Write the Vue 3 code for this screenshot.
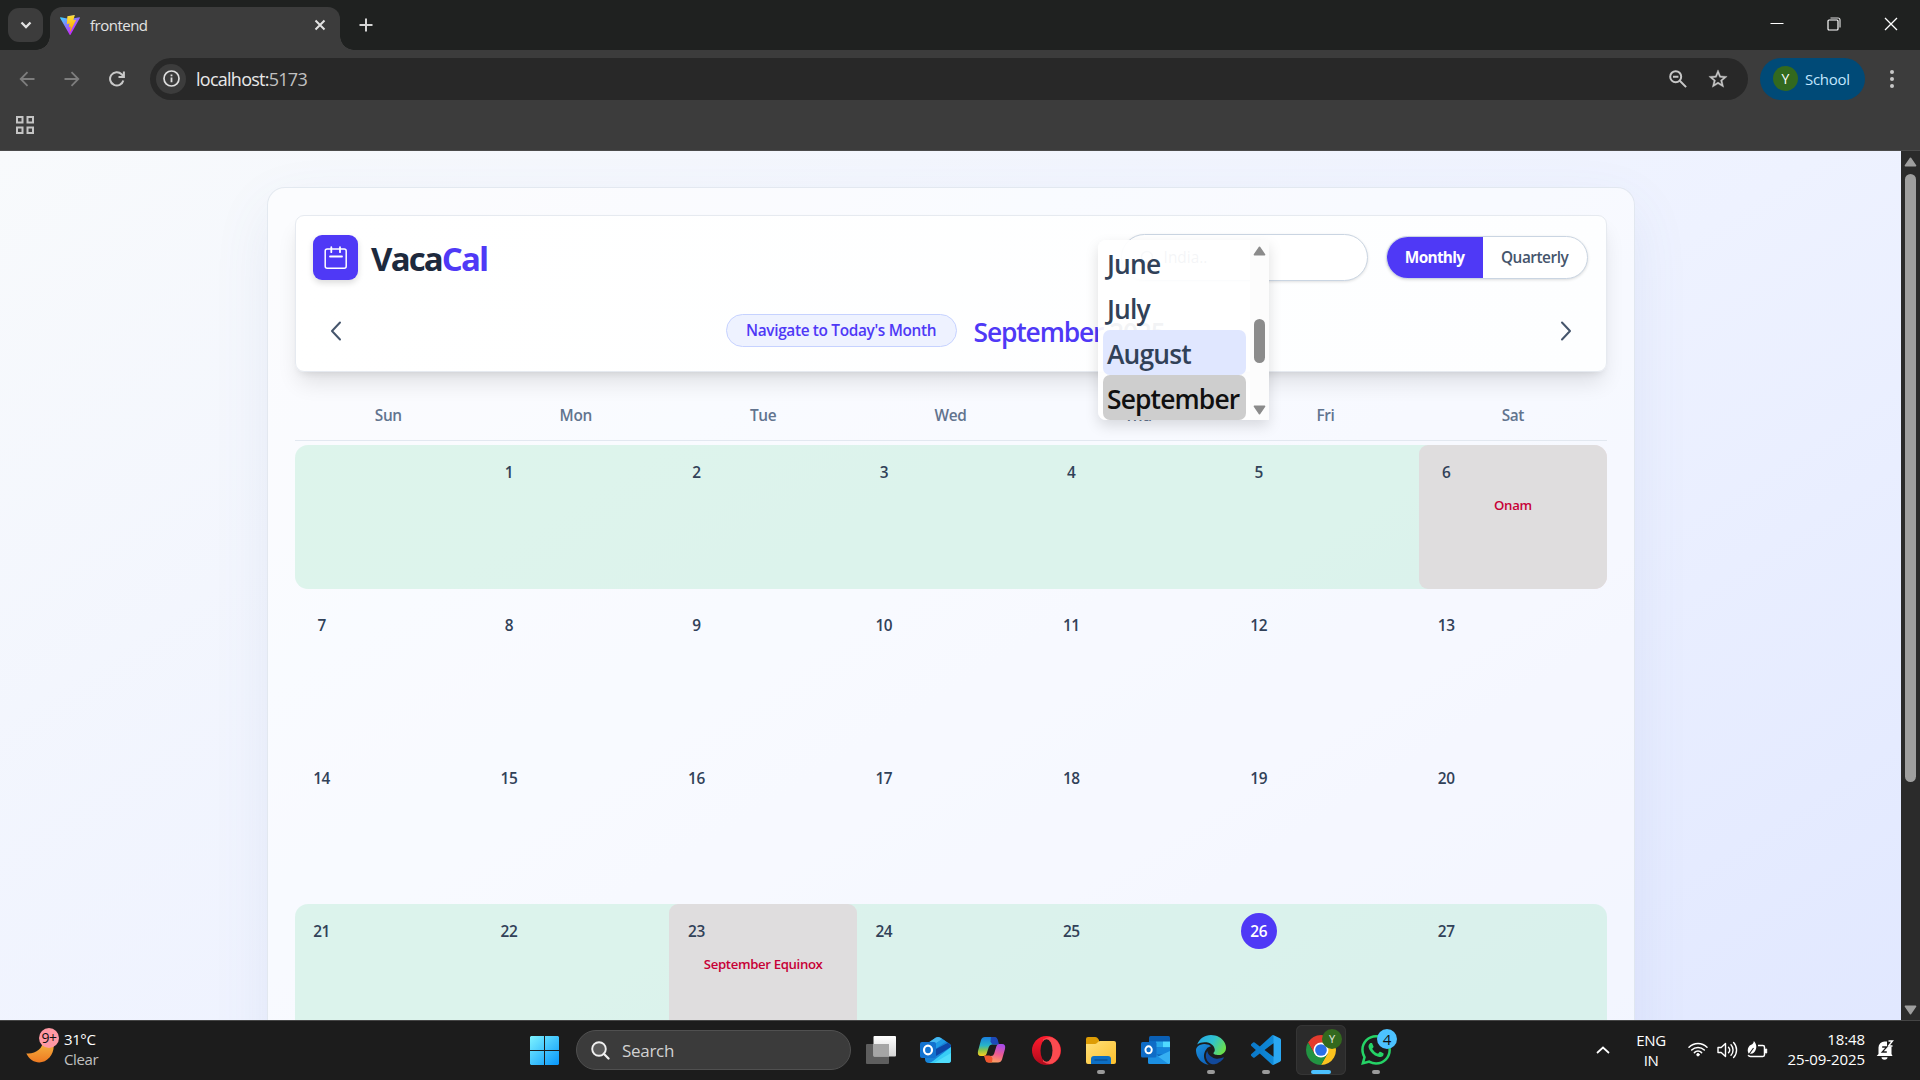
<script setup>
const weekdays = ['Sun', 'Mon', 'Tue', 'Wed', 'Thu', 'Fri', 'Sat']

const holidays = { 6: 'Onam', 23: 'September Equinox' }
const today = 26

const weeks = [
  { long: true, days: [null, 1, 2, 3, 4, 5, 6] },
  { long: false, days: [7, 8, 9, 10, 11, 12, 13] },
  { long: false, days: [14, 15, 16, 17, 18, 19, 20] },
  { long: true, days: [21, 22, 23, 24, 25, 26, 27] },
]

const months = [
  { name: 'June' },
  { name: 'July' },
  { name: 'August', state: 'hovered' },
  { name: 'September', state: 'selected' },
]
</script>

<template>
  <div class="screen">
    <!-- Tab strip -->
    <div class="tabstrip">
      <div class="tab-search">
        <svg width="12" height="8" viewBox="0 0 12 8"><path d="M1.5 1.5 6 6l4.500-4.500" fill="none" stroke="#e3e3e3" stroke-width="2.300" /></svg>
      </div>
      <div class="tab">
        <svg class="vite" width="20" height="20" viewBox="0 0 256 257">
          <defs>
            <linearGradient id="va" x1="-.8%" x2="57.600%" y1="7.700%" y2="78.400%"><stop offset="0%" stop-color="#41D1FF" /><stop offset="100%" stop-color="#BD34FE" /></linearGradient>
            <linearGradient id="vb" x1="43.400%" x2="50.300%" y1="2.200%" y2="89%"><stop offset="0%" stop-color="#FFEA83" /><stop offset="8%" stop-color="#FFDD35" /><stop offset="100%" stop-color="#FFA800" /></linearGradient>
          </defs>
          <path fill="url(#va)" d="M255.153 37.938L134.897 252.976c-2.483 4.440-8.862 4.466-11.382.048L.875 37.958c-2.746-4.814 1.371-10.646 6.827-9.670l120.385 21.517a6.537 6.537 0 0 0 2.322-.004l117.867-21.483c5.438-.991 9.574 4.796 6.877 9.620Z" />
          <path fill="url(#vb)" d="M185.432.063L96.440 17.501a3.268 3.268 0 0 0-2.634 3.014l-5.474 92.456a3.268 3.268 0 0 0 3.997 3.378l24.777-5.718c2.318-.535 4.413 1.507 3.936 3.838l-7.361 36.047c-.495 2.426 1.782 4.500 4.151 3.780l15.304-4.649c2.372-.720 4.652 1.360 4.150 3.788l-11.698 56.621c-.732 3.542 3.979 5.473 5.943 2.437l1.313-2.028l72.516-144.720c1.215-2.423-.880-5.186-3.540-4.672l-25.505 4.922c-2.396.462-4.435-1.770-3.759-4.114l16.646-57.705c.677-2.350-1.370-4.583-3.769-4.113Z" />
        </svg>
        <span class="tab-title">frontend</span>
        <svg width="12" height="12" viewBox="0 0 12 12"><path d="M1.500 1.500l9 9M10.500 1.500l-9 9" stroke="#e3e3e3" stroke-width="2" /></svg>
      </div>
      <div class="new-tab">
        <svg width="14" height="14" viewBox="0 0 14 14"><path d="M7 .5v13M.5 7h13" stroke="#d5d5d5" stroke-width="2" /></svg>
      </div>
      <div class="window-controls">
        <svg width="14" height="14" viewBox="0 0 14 14"><path d="M.5 6.500h13" stroke="#fff" stroke-width="1" /></svg>
        <svg width="14" height="14" viewBox="0 0 14 14"><path d="M3.500 1h7.500a2 2 0 0 1 2 2v7.500" fill="none" stroke="#ddd" stroke-width="1.200" /><rect x="1" y="3" width="10" height="10" rx="1" fill="none" stroke="#fff" stroke-width="1.200" /></svg>
        <svg width="14" height="14" viewBox="0 0 14 14"><path d="M1 1l12 12M13 1L1 13" stroke="#fff" stroke-width="1.300" /></svg>
      </div>
    </div>

    <!-- Toolbar -->
    <div class="toolbar">
      <svg class="nav-btn" width="16" height="16" viewBox="0 0 16 16"><path d="M15.500 8H2M8.500 1.200L1.700 8l6.800 6.800" fill="none" stroke="#7d7d7d" stroke-width="1.800" /></svg>
      <svg class="nav-btn" width="16" height="16" viewBox="0 0 16 16"><path d="M.5 8H14M7.500 1.200L14.300 8l-6.800 6.800" fill="none" stroke="#7d7d7d" stroke-width="1.800" /></svg>
      <svg class="nav-btn" width="16" height="16" viewBox="0 0 16 16"><path d="M14.300 9.500A6.700 6.700 0 1 1 12.600 3.200L14.600 5.300M9.500 6h5.400V.5" fill="none" stroke="#c9c9c9" stroke-width="2" /></svg>
      <div class="omnibox">
        <div class="site-info">
          <svg width="17" height="17" viewBox="0 0 17 17"><circle cx="8.500" cy="8.500" r="7.500" fill="none" stroke="#dedede" stroke-width="1.700" /><path d="M8.500 7.600v4.700M8.500 4.500v1.700" stroke="#dedede" stroke-width="1.800" /></svg>
        </div>
        <span class="url">localhost:<span>5173</span></span>
        <svg class="zoom-icon" width="18" height="18" viewBox="0 0 18 18"><circle cx="6.700" cy="6.700" r="5.500" fill="none" stroke="#c7c7c7" stroke-width="2" /><path d="M4 6.700h5.400M10.800 10.800l6.300 6.300" stroke="#c7c7c7" stroke-width="2" /></svg>
        <svg width="22" height="22" viewBox="0 0 24 24"><path fill="#c7c7c7" d="M22 9.240l-7.190-.62L12 2 9.190 8.630 2 9.240l5.460 4.730L5.820 21 12 17.270 18.180 21l-1.630-7.030L22 9.240zM12 15.400l-3.760 2.270 1-4.280-3.320-2.880 4.380-.38L12 6.100l1.710 4.040 4.380.38-3.320 2.880 1 4.280L12 15.400z" stroke="#c7c7c7" stroke-width=".4" /></svg>
      </div>
      <div class="profile">
        <span class="avatar">Y</span>
        <span class="profile-name">School</span>
      </div>
      <svg class="kebab" width="6" height="20" viewBox="0 0 6 20"><g fill="#c7c7c7"><circle cx="3" cy="3" r="2" /><circle cx="3" cy="10" r="2" /><circle cx="3" cy="17" r="2" /></g></svg>
    </div>
    <div class="bookmarks">
      <svg width="18" height="18" viewBox="0 0 18 18"><g fill="none" stroke="#c4c4c4" stroke-width="2"><rect x="1" y="1" width="5.500" height="5.500" /><rect x="11.500" y="1" width="5.500" height="5.500" /><rect x="1" y="11.500" width="5.500" height="5.500" /><rect x="11.500" y="11.500" width="5.500" height="5.500" /></g></svg>
    </div>

    <!-- Page -->
    <div class="viewport">
      <main class="page">
        <div class="card">
          <header class="header">
            <div class="row">
              <div class="brand">
                <div class="logo">
                  <svg width="25" height="25" viewBox="0 0 25 25" fill="none" stroke="#fff" stroke-linecap="round"><rect x="2.200" y="4" width="21" height="19.300" rx="2" stroke-width="1.500" /><path d="M8.300 2.200v5M17 2.200v5" stroke-width="1.800" /><path d="M7 11.500h12" stroke-width="1.800" /></svg>
                </div>
                <h1>Vaca<span>Cal</span></h1>
              </div>
              <div class="controls">
                <div class="country">
                  <svg width="16" height="16" viewBox="0 0 16 16"><circle cx="7" cy="7" r="5.500" fill="none" stroke="#94a3b8" stroke-width="1.500" /></svg>
                  <span>India..</span>
                </div>
                <div class="toggle">
                  <span class="toggle-item active"><span>Monthly</span></span>
                  <span class="toggle-item quarterly"><span>Quarterly</span></span>
                </div>
              </div>
            </div>
            <div class="row nav-row">
              <div class="arrow"><svg width="12" height="20" viewBox="0 0 12 20"><path d="M10 1.500L2 10l8 8.500" /></svg></div>
              <div class="month-nav">
                <div class="today-btn"><span>Navigate to Today's Month</span></div>
                <h2>September <span>2025</span></h2>
              </div>
              <div class="arrow"><svg width="12" height="20" viewBox="0 0 12 20"><path d="M2 1.500L10 10l-8 8.500" /></svg></div>
            </div>
          </header>

          <div class="weekdays">
            <span v-for="d in weekdays" :key="d">{{ d }}</span>
          </div>

          <div class="weeks">
            <div v-for="(w, i) in weeks" :key="i" class="week" :class="{ long: w.long }">
              <div v-for="(d, j) in w.days" :key="j" class="day" :class="{ holiday: holidays[d], last: j === 6 }">
                <div class="day-inner">
                  <span class="num" :class="{ today: d === today }">{{ d }}</span>
                  <span v-if="holidays[d]" class="event">{{ holidays[d] }}</span>
                </div>
              </div>
            </div>
          </div>
        </div>

        <div class="month-menu">
          <div class="month-list">
            <div v-for="m in months" :key="m.name" class="month" :class="m.state">{{ m.name }}</div>
          </div>
          <div class="menu-scroll">
            <svg width="13" height="10" viewBox="0 0 13 10"><path d="M6.500 1.300L11.600 8.700H1.400z" fill="#8b8b8b" stroke="#8b8b8b" stroke-width="1.500" stroke-linejoin="round" /></svg>
            <div class="menu-thumb"></div>
            <svg width="13" height="10" viewBox="0 0 13 10"><path d="M6.500 8.700L11.600 1.300H1.400z" fill="#8b8b8b" stroke="#8b8b8b" stroke-width="1.500" stroke-linejoin="round" /></svg>
          </div>
        </div>
      </main>
      <div class="scrollbar">
        <svg width="13" height="10" viewBox="0 0 13 10"><path d="M6.500 1.300L11.600 8.700H1.400z" fill="#9f9f9f" stroke="#9f9f9f" stroke-width="1.500" stroke-linejoin="round" /></svg>
        <div class="thumb"></div>
        <svg class="down" width="13" height="10" viewBox="0 0 13 10"><path d="M6.500 8.700L11.600 1.300H1.400z" fill="#9f9f9f" stroke="#9f9f9f" stroke-width="1.500" stroke-linejoin="round" /></svg>
      </div>
    </div>

    <!-- Taskbar -->
    <div class="taskbar">
      <div class="weather">
        <div class="moon">
          <svg width="30" height="30" viewBox="0 0 30 30"><defs><linearGradient id="mo" x1="0" y1="0" x2="0" y2="1"><stop offset="0" stop-color="#f7c64a" /><stop offset="1" stop-color="#ee7a22" /></linearGradient></defs><path d="M25 2c5.500 7 4.500 15.500-.5 21.500C18 31 6.500 30 1.300 19.500 12 20.500 20 13 17.500 3z" fill="url(#mo)" /></svg>
          <span class="count">9+</span>
        </div>
        <div class="weather-text"><span>31°C</span><span class="dim">Clear</span></div>
      </div>

      <div class="apps">
        <div class="slot">
          <svg width="29" height="29" viewBox="0 0 29 29"><defs><linearGradient id="wi" gradientUnits="userSpaceOnUse" x1="0" y1="0" x2="29" y2="29"><stop offset="0" stop-color="#7df3ff" /><stop offset="1" stop-color="#0796fb" /></linearGradient></defs><path fill="url(#wi)" d="M1 0h13v14H0V1zM15 0h13l1 1v13H15zM0 15h14v14H1l-1-1zM15 15h14v13l-1 1H15z" /></svg>
        </div>
        <div class="search">
          <svg width="19" height="19" viewBox="0 0 19 19"><circle cx="8" cy="8" r="6.800" fill="#5a5a5a" stroke="#f0f0f0" stroke-width="1.900" /><path d="M12.800 12.800l4.700 4.700" stroke="#f0f0f0" stroke-width="2.300" stroke-linecap="round" /></svg>
          <span>Search</span>
        </div>
        <div class="slot">
          <svg width="30" height="28" viewBox="0 0 30 28"><defs><linearGradient id="tv" x1="0" y1="0" x2="0" y2="1"><stop offset="0" stop-color="#fff" /><stop offset="1" stop-color="#d4d4d4" /></linearGradient></defs><rect x="0" y="8" width="23" height="20" rx="1" fill="#5e5e5e" /><rect x="7.500" y="0" width="22.500" height="20.500" rx="1" fill="url(#tv)" /><rect x="7.500" y="8" width="15.500" height="12.500" fill="#a5a5a5" /></svg>
        </div>
        <div class="slot">
          <svg width="32" height="28" viewBox="0 0 32 28"><path d="M5 9L16 1.500q2-1.200 4 0L30 8q1 .8 1 2v14q0 3-3 3H9q-4 0-4-4z" fill="#1784d8" /><path d="M5 9L16 1.500q2-1.200 4 0l2.500 1.600L9 12H5z" fill="#45b8f0" /><path d="M9 12L22.500 3.100 26 5.400 14 14z" fill="#1f9be6" /><path d="M14 14L28 6.700 30.500 9q.5 1 .5 2L16 20z" fill="#0d47a8" /><path d="M31 11v13q0 3-3 3H9q2-.5 4-2z" fill="#38cdf6" /><path d="M31 17v7q0 3-3 3H14z" fill="#5be4fd" opacity=".7" /><rect x="0" y="6" width="16" height="16" rx="2" fill="#1272cf" /><ellipse cx="8" cy="14" rx="4" ry="4.400" fill="none" stroke="#fff" stroke-width="2.200" /></svg>
        </div>
        <div class="slot">
          <svg width="29" height="28" viewBox="0 0 29 28"><defs><linearGradient id="c1" x1="0" y1="0" x2="0" y2="1"><stop offset="0" stop-color="#1a7fe0" /><stop offset=".45" stop-color="#28b4c8" /><stop offset=".7" stop-color="#8bc34a" /><stop offset="1" stop-color="#ffcf1f" /></linearGradient><linearGradient id="c2" x1=".6" y1="0" x2=".3" y2="1"><stop offset="0" stop-color="#a94be8" /><stop offset=".5" stop-color="#ee5c8f" /><stop offset="1" stop-color="#ffa95c" /></linearGradient></defs><path d="M8 1h9q2 0 3 3l1.500 4.500H15q-2.500 0-3.200 2.500L9.500 18q-.8 2-2.500 2H4Q0 20 1 15L4 4q1-3 4-3z" fill="url(#c1)" /><path d="M14 1h4q2 0 2.700 2.500L22 8.500h-5q-2.500 0-3.500-3z" fill="#1d49b8" /><path d="M21 26.500h-9q-2 0-3-2.500L7.500 20H14q2.500 0 3.200-2.500L19.500 10q.8-2 2.500-2h3q4 0 3 5l-3 10.500q-1 3-4 3z" fill="url(#c2)" /><path d="M15 26.500h-4q-2 0-2.700-2.500L7 19.500h5q2.500 0 3.500 3z" fill="#f0562f" /></svg>
        </div>
        <div class="slot">
          <svg width="29" height="29" viewBox="0 0 29 29"><defs><linearGradient id="op" x1="0" y1="0" x2="0" y2="1"><stop offset="0" stop-color="#ff1b2d" /><stop offset="1" stop-color="#b00a1c" /></linearGradient></defs><circle cx="14.500" cy="14.500" r="14.500" fill="url(#op)" /><path d="M11 3.500q7-5 12.500 0a14.500 14.500 0 0 1 0 22q-5.500 5-12.500 0z" fill="#fb4b50" /><ellipse cx="14.500" cy="14.500" rx="6" ry="11.300" fill="#1c1c1c" /></svg>
        </div>
        <div class="slot running">
          <svg width="30" height="27" viewBox="0 0 30 27"><defs><linearGradient id="fo" x1="0" y1="0" x2="1" y2="1"><stop offset="0" stop-color="#ffe07a" /><stop offset="1" stop-color="#fdc02c" /></linearGradient></defs><path d="M0 2q0-2 2-2h7q1.500 0 2.500 1L13 3v7H0z" fill="#dd9c05" /><path d="M0 7h9q1 0 2-1l1.500-1.500q.6-.5 1.500-.5h14q2 0 2 2v19q0 2-2 2H2q-2 0-2-2z" fill="url(#fo)" /><path d="M5 27v-5q0-3 3-3h14q3 0 3 3v5z" fill="#0d6fc4" /><path d="M8.500 23h13" stroke="#0b4a8c" stroke-width="1.200" /></svg>
        </div>
        <div class="slot">
          <svg width="30" height="28" viewBox="0 0 30 28"><rect x="8" y="0" width="21" height="20" rx="1.500" fill="#0a5fb4" /><path d="M8 5.500h7v6H8z" fill="#0d7ad4" /><path d="M15 5.500h7v6h-7z" fill="#28a8ea" /><path d="M22 5.500h7v6h-7z" fill="#50d9ff" /><path d="M15 11.500h14v7H15z" fill="#1585dc" /><path d="M7 12l12 9 10-6v11.500q0 1.500-1.500 1.500h-19Q7 28 7 26.500z" fill="#1b8fe2" /><path d="M29 15v11.500q0 1.500-1.500 1.500L17 20.500z" fill="#36b0f2" /><rect x="0" y="6" width="15.500" height="15.500" rx="1.500" fill="#0f6cc6" /><ellipse cx="7.600" cy="13.800" rx="3.200" ry="3.500" fill="none" stroke="#fff" stroke-width="1.900" /></svg>
        </div>
        <div class="slot running">
          <svg width="30" height="30" viewBox="0 0 24 24"><defs><linearGradient id="e1" x1="0" y1=".2" x2="1" y2=".6"><stop offset="0" stop-color="#27a9e6" /><stop offset=".5" stop-color="#2fc2cf" /><stop offset="1" stop-color="#6be04a" /></linearGradient><linearGradient id="e2" x1="0" y1="0" x2=".6" y2="1"><stop offset="0" stop-color="#1b93de" /><stop offset="1" stop-color="#0f63bd" /></linearGradient></defs>
            <path fill="#12499b" d="M21.860 17.860q.14 0 .25.12.1.13.1.25t-.11.33l-.32.46-.43.53-.44.5q-.26.25-.38.37l-.22.23q-.58.53-1.340 1.040-.76.51-1.600.91-.86.4-1.740.64t-1.670.24q-.9 0-1.690-.28-.8-.28-1.480-.78-.68-.5-1.220-1.170-.53-.66-.92-1.440-.38-.77-.58-1.600-.2-.83-.2-1.670 0-1 .32-1.960.33-.97.87-1.800.14.95.55 1.770.41.82 1.020 1.500.6.68 1.380 1.210.78.54 1.640.9.86.36 1.770.56.92.2 1.800.2 1.120 0 2.180-.24 1.060-.23 2.060-.72l.2-.1.2-.05z" />
            <path fill="url(#e2)" d="M6.360 16.590q0 1.100.27 2.150.27 1.060.78 2.030.51.96 1.240 1.770.74.82 1.660 1.400-1.470-.2-2.800-.74-1.330-.55-2.480-1.370-1.150-.83-2.080-1.900-.92-1.070-1.580-2.330T.36 14.940Q0 13.540 0 12.060q0-.81.32-1.490.31-.68.83-1.230.53-.55 1.200-.96.66-.4 1.350-.66.74-.27 1.500-.39.78-.12 1.550-.12.7 0 1.420.1.72.12 1.400.35.68.23 1.320.57.63.35 1.160.83-.35 0-.7.07-.33.07-.65.23v-.02q-.63.28-1.200.74-.57.46-1.050 1.040-.48.58-.87 1.260-.38.67-.65 1.390-.27.71-.42 1.440-.15.72-.15 1.380z" />
            <path fill="url(#e1)" d="M11.960.06q1.700 0 3.330.39 1.630.38 3.070 1.150 1.430.77 2.620 1.930 1.180 1.160 1.980 2.700.49.94.76 1.960.28 1 .28 2.080 0 .89-.23 1.700-.24.8-.69 1.480-.45.68-1.100 1.220-.64.53-1.450.88-.54.24-1.110.36-.58.13-1.160.13-.42 0-.97-.03-.54-.03-1.100-.12-.55-.1-1.050-.28-.5-.19-.84-.5-.12-.09-.23-.24-.1-.16-.1-.33 0-.15.16-.35.16-.2.35-.5.2-.28.36-.68.16-.4.16-.95 0-1.060-.4-1.960-.4-.91-1.060-1.640-.66-.74-1.520-1.280-.86-.55-1.790-.89-.84-.3-1.720-.44-.87-.14-1.760-.14-1.550 0-3.060.45T.94 7.550q.71-1.740 1.810-3.130 1.100-1.380 2.520-2.350Q6.680 1.100 8.370.58q1.700-.52 3.580-.52Z" />
          </svg>
        </div>
        <div class="slot running">
          <svg width="30" height="30" viewBox="0 0 24 24"><defs><linearGradient id="vs" x1="0" y1="0" x2="1" y2="0"><stop offset="0" stop-color="#0b78c8" /><stop offset=".74" stop-color="#0f8ad8" /><stop offset=".76" stop-color="#2aa7f2" /><stop offset="1" stop-color="#2aa7f2" /></linearGradient></defs><path fill="url(#vs)" d="M23.150 2.587L18.210.210a1.494 1.494 0 0 0-1.705.290l-9.460 8.630-4.120-3.128a.999.999 0 0 0-1.276.057L.327 7.261A1 1 0 0 0 .326 8.740L3.899 12 .326 15.260a1 1 0 0 0 .001 1.479L1.650 17.940a.999.999 0 0 0 1.276.057l4.120-3.128 9.460 8.630a1.492 1.492 0 0 0 1.704.290l4.942-2.377A1.500 1.500 0 0 0 24 20.060V3.939a1.500 1.500 0 0 0-.850-1.352zm-5.146 14.861L10.826 12l7.178-5.448v10.896z" /></svg>
        </div>
        <div class="slot current">
          <svg width="30" height="30" viewBox="-20 -20 40 40"><path d="M-17.320-10A20 20 0 0 1 17.320-10L0-10-8.660 5z" fill="#e33b2e" /><path d="M17.320-10A20 20 0 0 1 0 20L8.660 5 0-10z" fill="#fcc31e" /><path d="M0 20A20 20 0 0 1-17.320-10L-8.660 5 8.660 5z" fill="#229342" /><circle r="10" fill="#fff" /><circle r="7.800" fill="#2a6fe8" /></svg>
          <span class="badge user">Y</span>
        </div>
        <div class="slot running">
          <svg width="30" height="30" viewBox="0 0 24 24"><path fill="#25d366" d="M17.472 14.382c-.297-.149-1.758-.867-2.030-.967-.273-.099-.471-.148-.670.150-.197.297-.767.966-.940 1.164-.173.199-.347.223-.644.075-.297-.150-1.255-.463-2.390-1.475-.883-.788-1.480-1.761-1.653-2.059-.173-.297-.018-.458.130-.606.134-.133.298-.347.446-.520.149-.174.198-.298.298-.497.099-.198.050-.371-.025-.520-.075-.149-.669-1.612-.916-2.207-.242-.579-.487-.500-.669-.510-.173-.008-.371-.010-.570-.010-.198 0-.520.074-.792.372-.272.297-1.040 1.016-1.040 2.479 0 1.462 1.065 2.875 1.213 3.074.149.198 2.096 3.200 5.077 4.487.709.306 1.262.489 1.694.625.712.227 1.360.195 1.871.118.571-.085 1.758-.719 2.006-1.413.248-.694.248-1.289.173-1.413-.074-.124-.272-.198-.570-.347m-5.421 7.403h-.004a9.870 9.870 0 0 1-5.031-1.378l-.361-.214-3.741.982.998-3.648-.235-.374a9.860 9.860 0 0 1-1.510-5.260c.001-5.450 4.436-9.884 9.888-9.884 2.640 0 5.122 1.030 6.988 2.898a9.825 9.825 0 0 1 2.893 6.994c-.003 5.450-4.437 9.884-9.885 9.884m8.413-18.297A11.815 11.815 0 0 0 12.050 0C5.495 0 .160 5.335.157 11.892c0 2.096.547 4.142 1.588 5.945L.057 24l6.305-1.654a11.882 11.882 0 0 0 5.683 1.448h.005c6.554 0 11.890-5.335 11.893-11.893a11.821 11.821 0 0 0-3.480-8.413Z" /></svg>
          <span class="badge">4</span>
        </div>
      </div>

      <div class="tray">
        <svg class="caret" width="14" height="8" viewBox="0 0 14 8"><path d="M1 7l6-5.500L13 7" fill="none" stroke="#fff" stroke-width="1.700" /></svg>
        <div class="lang"><span>ENG</span><span>IN</span></div>
        <div class="status">
          <svg width="20" height="16" viewBox="0 0 20 16" fill="none" stroke="#fff" stroke-width="1.500" stroke-linecap="round"><path d="M1 6.200a12.700 12.700 0 0 1 18 0M3.700 9a8.900 8.900 0 0 1 12.600 0M6.400 11.600a5.100 5.100 0 0 1 7.200 0" /><circle cx="10" cy="13.700" r="1.300" fill="#fff" stroke-width=".8" /></svg>
          <svg width="21" height="18" viewBox="0 0 21 18" fill="none" stroke="#fff" stroke-width="1.400" stroke-linecap="round" stroke-linejoin="round"><path d="M1 6.500h3.200L8.500 2.500v13L4.200 11.500H1zM11.500 6.200a4.200 4.200 0 0 1 0 5.600M14 3.800a7.600 7.600 0 0 1 0 10.400M16.600 1.500a11 11 0 0 1 0 15" /></svg>
          <svg width="21" height="18" viewBox="0 0 21 18"><path d="M11 4.500h4.800q1.700 0 1.700 1.700v7.600q0 1.700-1.700 1.700H3.500q-1.700 0-2.300-1.700" fill="none" stroke="#fff" stroke-width="1.500" /><path d="M18.500 8h1.200v4h-1.200z" fill="#fff" stroke="#fff" /><path d="M6.800 0c3.200 3 3.400 8.200.2 11.500q-2 2-5.500 1C-.3 9 1.200 5 4.200 3.800 5.800 3 6.800 2 6.800 0z" fill="#fff" /><path d="M1.500 14L6.500 7" stroke="#1c1c1c" stroke-width="1.100" /></svg>
        </div>
        <div class="clock"><span>18:48</span><span>25-09-2025</span></div>
        <svg class="bell" width="18" height="20" viewBox="0 0 18 20"><path d="M2.500 14V7.500A6 6 0 0 1 8.500 1.500h2.500v5h4.500V14l1 2H.7z" fill="#fff" /><path d="M5.500 17.300h6a3 2.400 0 0 1-6 0z" fill="#fff" /><path d="M12.500 1h4l-4 5h4" fill="none" stroke="#fff" stroke-width="1.400" /><path d="M6.200 7h4.600l-4.600 5h4.600" fill="none" stroke="#1c1c1c" stroke-width="1.300" /></svg>
      </div>
    </div>
  </div>
</template>

<style>
body {
  margin: 0;
  background: #1c1c1c;
}
</style>

<style scoped>
.screen {
  width: 1920px;
  height: 1080px;
  display: flex;
  flex-direction: column;
  overflow: hidden;
  font-family: 'Open Sans', 'Noto Sans', sans-serif;
  background: #3c3c3c;
}
.screen *,
.screen {
  box-sizing: border-box;
}
svg {
  display: block;
  flex: none;
}
h1,
h2 {
  margin: 0;
}

/* tab strip */
.tabstrip {
  flex: none;
  height: 50px;
  display: flex;
  background: #1f2120;
  padding-left: 8px;
}
.tab-search {
  width: 35px;
  height: 34px;
  margin-top: 8px;
  border-radius: 11px;
  background: #3c3c3c;
  display: flex;
  align-items: center;
  justify-content: center;
}
.tab {
  position: relative;
  width: 290px;
  height: 43px;
  margin: 7px 0 0 7px;
  padding: 0 14px 7px 10px;
  border-radius: 12px 12px 0 0;
  background: #3c3c3c;
  display: flex;
  align-items: center;
}
.tab::before,
.tab::after {
  content: '';
  position: absolute;
  bottom: 0;
  width: 14px;
  height: 14px;
}
.tab::before {
  left: -14px;
  background: radial-gradient(circle at 0 0, transparent 13.500px, #3c3c3c 14px);
}
.tab::after {
  right: -14px;
  background: radial-gradient(circle at 100% 0, transparent 13.500px, #3c3c3c 14px);
}
.tab-title {
  flex: 1;
  margin-left: 10px;
  font-size: 15px;
  letter-spacing: -0.500px;
  color: #e3e3e3;
}
.new-tab {
  margin: 18px 0 0 19px;
}
.window-controls {
  margin: 17px 22px 0 auto;
  display: flex;
  gap: 43px;
}

/* toolbar */
.toolbar {
  flex: none;
  height: 57px;
  display: flex;
  align-items: center;
  padding: 0 25px 0 19px;
}
.nav-btn {
  margin-right: 29px;
}
.omnibox {
  width: 1598px;
  height: 42px;
  margin-left: -4px;
  border-radius: 21px;
  background: #282828;
  display: flex;
  align-items: center;
  padding: 0 19px 0 6px;
}
.site-info {
  width: 30px;
  height: 30px;
  border-radius: 50%;
  background: #3c3c3c;
  display: flex;
  align-items: center;
  justify-content: center;
}
.url {
  flex: 1;
  margin-left: 10px;
  font-size: 18px;
  letter-spacing: -0.740px;
  color: #e8e8e8;
}
.url span {
  color: #c0c0c0;
}
.zoom-icon {
  margin-right: 20px;
}
.profile {
  width: 105px;
  height: 42px;
  margin-left: 12px;
  border-radius: 21px;
  background: #004a77;
  display: flex;
  align-items: center;
  padding-left: 13px;
}
.avatar {
  width: 25px;
  height: 25px;
  border-radius: 50%;
  background: #33691e;
  color: #fff;
  font-size: 14px;
  line-height: 25px;
  text-align: center;
}
.profile-name {
  margin-left: 7px;
  font-size: 15px;
  letter-spacing: -0.300px;
  color: #c2e7ff;
}
.kebab {
  margin-left: auto;
}
.bookmarks {
  flex: none;
  height: 44px;
  padding: 9px 0 0 16px;
  border-bottom: 1px solid #4b4b4b;
}

/* page */
.viewport {
  flex: none;
  height: 869px;
  display: flex;
}
.page {
  position: relative;
  width: 1901px;
  height: 869px;
  overflow: hidden;
  padding: 36px 0 0 266.600px;
  background: linear-gradient(to bottom right, #f8fafc, #eef2ff 48%, #e0e7ff 90%) 0 0 / 1901px 1180px;
}
.card {
  width: 1368px;
  height: 1100px;
  padding: 27px;
  border: 1px solid rgba(203, 213, 225, 0.5);
  border-radius: 18px;
  background: rgba(255, 255, 255, 0.55);
  box-shadow: 0 20px 60px -4px rgba(80, 110, 170, 0.1);
}
.header {
  height: 157px;
  padding: 18px 17.500px;
  border: 1px solid #e6eaf0;
  border-radius: 9px;
  background: linear-gradient(100deg, #ffffff, #fdfeff);
  box-shadow: 0 14px 22px -4px rgba(0, 0, 0, 0.11), 0 5px 9px -5px rgba(0, 0, 0, 0.12);
}
.row {
  display: flex;
  align-items: center;
  justify-content: space-between;
  height: 47px;
}
.brand {
  display: flex;
  align-items: center;
}
.logo {
  width: 45px;
  height: 45px;
  border-radius: 9px;
  background: #4f39f6;
  box-shadow: 0 3px 6px rgba(0, 0, 0, 0.14);
  display: flex;
  align-items: center;
  justify-content: center;
}
h1 {
  margin: 2px 0 0 13px;
  font-size: 33px;
  font-weight: 700;
  line-height: 45px;
  letter-spacing: -1.900px;
  color: #1d293d;
}
h1 span {
  color: #4f39f6;
}
.controls {
  display: flex;
  align-items: center;
  gap: 18px;
  margin-right: 0.500px;
}
.country {
  width: 247px;
  height: 47px;
  padding-left: 18px;
  border: 1px solid #cad5e2;
  border-radius: 24px;
  background: #fff;
  box-shadow: 0 1px 3px rgba(0, 0, 0, 0.12);
  display: flex;
  align-items: center;
  gap: 8px;
  font-size: 15.400px;
  color: #64748b;
}
.toggle {
  width: 202px;
  height: 43px;
  border: 1px solid #cad5e2;
  border-radius: 22px;
  background: #fff;
  overflow: hidden;
  box-shadow: 0 1px 3px rgba(0, 0, 0, 0.14);
  display: flex;
}
.toggle-item {
  width: 104px;
  display: flex;
  align-items: center;
  justify-content: center;
  font-size: 15.400px;
  font-weight: 600;
  letter-spacing: -0.480px;
  color: #45556c;
}
.toggle-item.active {
  width: 96px;
  background: #4f39f6;
  color: #fff;
  font-weight: 700;
  letter-spacing: -0.700px;
}
.nav-row {
  margin-top: 26px;
}
.arrow {
  width: 45px;
  height: 45px;
  display: flex;
  align-items: center;
  justify-content: center;
}
.arrow path {
  fill: none;
  stroke: #45556c;
  stroke-width: 2;
  stroke-linecap: round;
  stroke-linejoin: round;
}
.month-nav {
  display: flex;
  align-items: center;
}
.today-btn {
  width: 231px;
  height: 33px;
  border: 1px solid #c6d2ff;
  border-radius: 17px;
  background: #eef2ff;
  display: flex;
  align-items: center;
  justify-content: center;
  font-size: 15.400px;
  font-weight: 600;
  letter-spacing: -0.340px;
  color: #4f39f6;
  white-space: nowrap;
}
h2 {
  width: 202px;
  margin: 4px 0 0 17px;
  font-size: 26.400px;
  font-weight: 600;
  line-height: 35px;
  letter-spacing: -1.150px;
  white-space: nowrap;
  color: #4f39f6;
}
h2 span {
  color: #45556c;
}
.weekdays {
  height: 44px;
  margin-top: 25px;
  padding-top: 8px;
  border-bottom: 1px solid #e2e8f0;
  display: grid;
  grid-template-columns: repeat(7, 1fr);
  text-align: center;
  font-size: 15.400px;
  font-weight: 600;
  line-height: 22px;
  letter-spacing: -0.350px;
  color: #62748e;
}
.weeks {
  margin-top: 4px;
  display: flex;
  flex-direction: column;
  gap: 9px;
}
.week {
  height: 144px;
  display: grid;
  grid-template-columns: repeat(7, 1fr);
  border-radius: 13px;
  overflow: hidden;
}
.week.long {
  background: rgba(186, 236, 212, 0.45);
}
.day.holiday.last {
  background: linear-gradient(90deg, transparent 50%, #fadce6 50%);
}
.day-inner {
  height: 100%;
  padding: 9px;
  display: flex;
  flex-direction: column;
}
.holiday .day-inner {
  border-radius: 9px;
  background: #dfddde;
}
.num {
  width: 36px;
  height: 36px;
  border-radius: 50%;
  text-align: center;
  font-size: 15.400px;
  font-weight: 600;
  line-height: 38px;
  letter-spacing: -0.400px;
  color: #314158;
}
.num.today {
  background: #4f39f6;
  color: #fff;
}
.event {
  margin-top: 5px;
  text-align: center;
  font-size: 13.200px;
  font-weight: 600;
  line-height: 20px;
  letter-spacing: -0.350px;
  white-space: nowrap;
  color: #c70036;
}

/* month dropdown */
.month-menu {
  position: absolute;
  left: 1098px;
  top: 89px;
  width: 171px;
  height: 180px;
  display: flex;
  border-radius: 8px 0 0 8px;
  background: rgba(255, 255, 255, 0.93);
  box-shadow: 0 6px 14px rgba(0, 0, 0, 0.13);
}
.month-list {
  width: 152px;
  padding: 0 4px 0 5px;
}
.month {
  height: 45px;
  padding: 1px 0 0 4px;
  border-radius: 7px;
  font-size: 26.400px;
  font-weight: 600;
  line-height: 46px;
  letter-spacing: -0.850px;
  color: #314158;
}
.month.hovered {
  background: #e0e7ff;
}
.month.selected {
  background: #cecece;
  color: #101010;
}
.menu-scroll {
  width: 19px;
  background: #fcfcfc;
  display: flex;
  flex-direction: column;
  align-items: center;
  padding: 6px 0 5px;
}
.menu-thumb {
  width: 11px;
  height: 44px;
  margin: 63px 0 42px;
  border-radius: 6px;
  background: #8b8b8b;
}

/* window scrollbar */
.scrollbar {
  width: 19px;
  background: #2b2b2b;
  display: flex;
  flex-direction: column;
  align-items: center;
  padding: 6px 0 5px;
}
.thumb {
  width: 11px;
  height: 608px;
  margin-top: 7px;
  border-radius: 6px;
  background: #9f9f9f;
}
.down {
  margin-top: auto;
}

/* taskbar */
.taskbar {
  flex: none;
  height: 60px;
  display: flex;
  border-top: 1px solid #454545;
  background: #1c1c1c;
  color: #fff;
}
.weather {
  width: 519px;
  display: flex;
  padding-left: 25px;
}
.moon {
  position: relative;
  padding-top: 13px;
}
.count {
  position: absolute;
  left: 14px;
  top: 7px;
  width: 20px;
  height: 20px;
  border-radius: 50%;
  background: #ff99a4;
  color: #111;
  font-size: 14px;
  line-height: 20px;
  letter-spacing: -0.500px;
  text-align: center;
}
.weather-text {
  display: flex;
  flex-direction: column;
  margin: 8px 0 0 9px;
  font-size: 15px;
  line-height: 20px;
  letter-spacing: -0.400px;
}
.dim {
  color: #c0c0c0;
}
.apps {
  display: flex;
  gap: 5px;
  padding-top: 4px;
}
.slot {
  position: relative;
  width: 50px;
  height: 50px;
  border-radius: 6px;
  display: flex;
  align-items: center;
  justify-content: center;
}
.slot.current {
  background: #2b2b2b;
  box-shadow: inset 0 0 0 1px #353535;
}
.slot.running::after,
.slot.current::after {
  content: '';
  position: absolute;
  left: 21px;
  bottom: 1px;
  width: 8px;
  height: 4px;
  border-radius: 2px;
  background: #9a9a9a;
}
.slot.current::after {
  left: 15px;
  width: 20px;
  background: #4cc2ff;
}
.badge {
  position: absolute;
  right: 4px;
  top: 4px;
  width: 20px;
  height: 20px;
  border-radius: 50%;
  background: #4cc2ff;
  color: #111;
  font-size: 15px;
  line-height: 20px;
  text-align: center;
}
.badge.user {
  background: #33691e;
  color: #e6eee2;
  font-size: 11px;
}
.search {
  width: 275px;
  height: 40px;
  margin: 5px 0 0 2px;
  padding: 0 14px;
  border: 1px solid #505050;
  border-radius: 20px;
  background: #3b3b3b;
  display: flex;
  align-items: center;
  font-size: 17px;
  letter-spacing: -0.300px;
  color: #d2d2d2;
}
.search span {
  margin-left: 12px;
}
.tray {
  margin-left: auto;
  display: flex;
  padding-right: 26px;
  font-size: 15px;
  line-height: 20px;
  letter-spacing: -0.400px;
}
.caret {
  margin-top: 25px;
}
.lang {
  width: 32px;
  margin: 9px 0 0 25px;
  display: flex;
  flex-direction: column;
  align-items: center;
}
.status {
  margin: 20px 0 0 21px;
  display: flex;
  gap: 9px;
}
.clock {
  width: 80px;
  margin: 8px 0 0 17px;
  display: flex;
  flex-direction: column;
  align-items: flex-end;
  white-space: nowrap;
  letter-spacing: -0.080px;
}
.bell {
  margin: 19px 0 0 11px;
}
</style>
